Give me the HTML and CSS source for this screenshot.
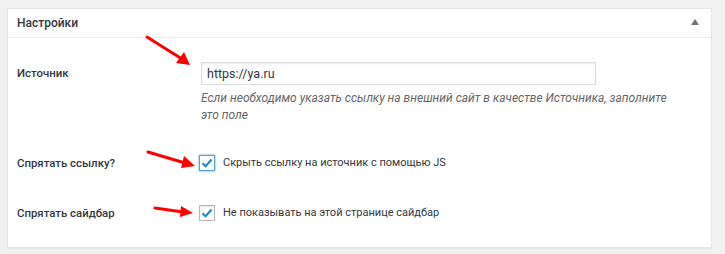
FILE: index.html
```html
<!DOCTYPE html>
<html lang="ru">
<head>
    <meta charset="UTF-8">
    <title>Настройки</title>
    <link rel="stylesheet" href="styles.css">
</head>
<body>
    <div class="postbox">
        <div class="postbox-header">
            <h2>Настройки</h2>
            <span class="toggle-arrow"></span>
        </div>
        <div class="postbox-inside">
            <div class="field-row">
                <label class="field-label field-label-input" for="source-url">Источник</label>
                <div class="field-value">
                    <input type="text" id="source-url" class="regular-text" value="https://ya.ru">
                    <p class="description">Если необходимо указать ссылку на внешний сайт в качестве Источника, заполните это поле</p>
                </div>
            </div>
            <div class="field-row field-row-check first-check">
                <div class="field-label">Спрятать ссылку?</div>
                <label class="check-label">
                    <span class="checkbox is-focused">
                        <svg width="12" height="10" viewBox="0 0 12 10"><path d="M1.5 5.2 L4.6 8.2 L10.6 1.6" fill="none" stroke="#1e8cbe" stroke-width="2.2"/></svg>
                    </span>
                    Скрыть ссылку на источник с помощью JS
                </label>
            </div>
            <div class="field-row field-row-check second-check">
                <div class="field-label">Спрятать сайдбар</div>
                <label class="check-label">
                    <span class="checkbox">
                        <svg width="12" height="10" viewBox="0 0 12 10"><path d="M1.5 5.2 L4.6 8.2 L10.6 1.6" fill="none" stroke="#1e8cbe" stroke-width="2.2"/></svg>
                    </span>
                    Не показывать на этой странице сайдбар
                </label>
            </div>
        </div>
    </div>

    <!-- красные стрелки поверх скриншота -->
    <svg class="arrows" width="725" height="254" viewBox="0 0 725 254">
        <g stroke="#ff0000" stroke-width="3" stroke-linecap="round">
            <line x1="147" y1="37" x2="182" y2="59"/>
            <line x1="148" y1="152" x2="185" y2="163"/>
            <line x1="155" y1="208" x2="183" y2="212"/>
        </g>
        <g fill="#ff0000">
            <polygon points="190,65 176,63 184,52"/>
            <polygon points="195,166 181,168 184,156"/>
            <polygon points="193,213 180,217 181,206"/>
        </g>
    </svg>
</body>
</html>
```

FILE: styles.css
```css
body {
    margin: 0;
    padding: 8px 13px 6px 7px;
    background: #f1f1f1;
    font-family: Roboto, "Liberation Sans", Arial, sans-serif;
    color: #23282d;
    position: relative;
}
.postbox {
    background: #fff;
    border: 1px solid #e5e5e5;
    box-shadow: 0 1px 1px rgba(0, 0, 0, 0.04);
    height: 238px;
}
.postbox-header {
    display: flex;
    align-items: center;
    justify-content: space-between;
    height: 28px;
    padding: 0 12px 0 9px;
    border-bottom: 1px solid #eee;
}
.postbox-header h2 {
    margin: 0;
    font-size: 12px;
    font-weight: 500;
    color: #32373c;
}
.toggle-arrow {
    width: 0;
    height: 0;
    border-left: 4px solid transparent;
    border-right: 4px solid transparent;
    border-bottom: 6px solid #72777c;
    margin-top: -2px;
}
.postbox-inside {
    padding: 24px 10px 0 9px;
}
.field-row {
    display: grid;
    grid-template-columns: 183px 1fr;
}
.field-row-check {
    align-items: center;
}
.first-check {
    margin-top: 31px;
}
.second-check {
    margin-top: 34px;
}
.field-label {
    font-size: 11.4px;
    font-weight: 500;
    line-height: 16px;
    color: #32373c;
}
.field-label-input {
    line-height: 23px;
}
.field-value {
    padding-left: 1px;
}
.regular-text {
    box-sizing: border-box;
    width: 395px;
    height: 23px;
    margin: 0;
    padding: 0 5px;
    border: 1px solid #ddd;
    box-shadow: inset 0 1px 2px rgba(0, 0, 0, 0.07);
    font-family: Roboto, "Liberation Sans", Arial, sans-serif;
    font-size: 12.5px;
    color: #32373c;
    outline: none;
}
.description {
    margin: 5px 0 0;
    width: 480px;
    font-size: 12px;
    font-style: italic;
    line-height: 17px;
    color: #666;
}
.check-label {
    display: flex;
    align-items: center;
    font-size: 11px;
    line-height: 16px;
    margin-left: -1px;
    color: #32373c;
}
.checkbox {
    box-sizing: border-box;
    width: 16px;
    height: 16px;
    margin-right: 8px;
    border: 1px solid #b4b9be;
    box-shadow: inset 0 1px 2px rgba(0, 0, 0, 0.1);
    display: flex;
    align-items: center;
    justify-content: center;
    background: #fff;
}
.checkbox.is-focused {
    border-color: #5b9dd9;
    box-shadow: 0 0 2px rgba(30, 140, 190, 0.8);
}
.arrows {
    position: absolute;
    top: 0;
    left: 0;
    pointer-events: none;
}
```
